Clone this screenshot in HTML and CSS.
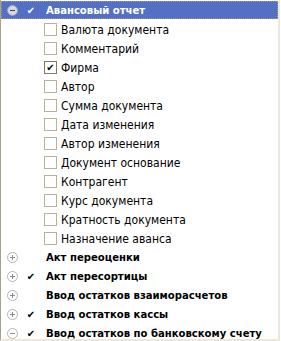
FILE: index.html
```html
<!DOCTYPE html>
<html>
<head>
<meta charset="utf-8">
<link rel="stylesheet" href="styles.css">
</head>
<body>
<div class="tree">
  <div class="row group selected">
    <span class="exp minus"></span>
    <span class="mark">✔</span>
    <span class="label">Авансовый отчет</span>
  </div>
  <div class="row child"><span class="cb"></span><span class="label">Валюта документа</span></div>
  <div class="row child"><span class="cb"></span><span class="label">Комментарий</span></div>
  <div class="row child"><span class="cb on">✔</span><span class="label">Фирма</span></div>
  <div class="row child"><span class="cb"></span><span class="label">Автор</span></div>
  <div class="row child"><span class="cb"></span><span class="label">Сумма документа</span></div>
  <div class="row child"><span class="cb"></span><span class="label">Дата изменения</span></div>
  <div class="row child"><span class="cb"></span><span class="label">Автор изменения</span></div>
  <div class="row child"><span class="cb"></span><span class="label">Документ основание</span></div>
  <div class="row child"><span class="cb"></span><span class="label">Контрагент</span></div>
  <div class="row child"><span class="cb"></span><span class="label">Курс документа</span></div>
  <div class="row child"><span class="cb"></span><span class="label">Кратность документа</span></div>
  <div class="row child"><span class="cb"></span><span class="label">Назначение аванса</span></div>
  <div class="row group"><span class="exp plus"></span><span class="mark"></span><span class="label">Акт переоценки</span></div>
  <div class="row group"><span class="exp plus"></span><span class="mark">✔</span><span class="label">Акт пересортицы</span></div>
  <div class="row group"><span class="exp plus"></span><span class="mark"></span><span class="label">Ввод остатков взаиморасчетов</span></div>
  <div class="row group"><span class="exp plus"></span><span class="mark">✔</span><span class="label">Ввод остатков кассы</span></div>
  <div class="row group"><span class="exp minus"></span><span class="mark">✔</span><span class="label">Ввод остатков по банковскому счету</span></div>
</div>
</body>
</html>
```
FILE: styles.css
```css
html, body { margin: 0; padding: 0; background: #fff; }
.tree {
  width: 277px;
  height: 338px;
  border-left: 1px solid #a8a388;
  border-right: 2px solid #ece9d8;
  border-bottom: 2px solid #ece9d8;
  padding-top: 1px;
  overflow: hidden;
  font-family: "DejaVu Sans Condensed", "DejaVu Sans", sans-serif;
  font-size: 12px;
  color: #000;
}
.row {
  height: 19px;
  display: flex;
  align-items: center;
  white-space: nowrap;
}
.row.selected {
  background: #5470c4;
  color: #fff;
  outline: 1px dotted #a09a7c;
  outline-offset: -1px;
  height: 18px;
  margin-bottom: 1px;
}
.group .label { font-weight: bold; font-size: 11.2px; }
.exp {
  width: 9px; height: 9px;
  border: 1px solid #b4b4b4;
  border-radius: 50%;
  margin-left: 6px;
  position: relative;
  flex: none;
}
.exp::before {
  content: "";
  position: absolute;
  left: 2px; top: 4px; width: 5px; height: 1px;
  background: #8c8c8c;
}
.plus::after {
  content: "";
  position: absolute;
  left: 4px; top: 2px; width: 1px; height: 5px;
  background: #8c8c8c;
}
.selected .exp { background: #d8d8e0; border-color: #9aa0c0; }
.selected .exp::before { background: #404050; }
.mark {
  width: 10px;
  margin-left: 8px;
  margin-right: 10px;
  font-family: "DejaVu Sans", sans-serif;
  font-size: 10px;
  font-weight: bold;
  text-align: center;
  flex: none;
}
.child .cb { margin-left: 43px; }
.cb {
  width: 11px; height: 11px;
  border: 1px solid #b8b29a;
  background: #fff;
  margin-right: 4px;
  display: flex;
  align-items: center;
  justify-content: center;
  font-family: "DejaVu Sans", sans-serif;
  font-size: 10px;
  font-weight: bold;
  line-height: 1;
  flex: none;
}
.cb.on { border-color: #7f7a62; }
```
